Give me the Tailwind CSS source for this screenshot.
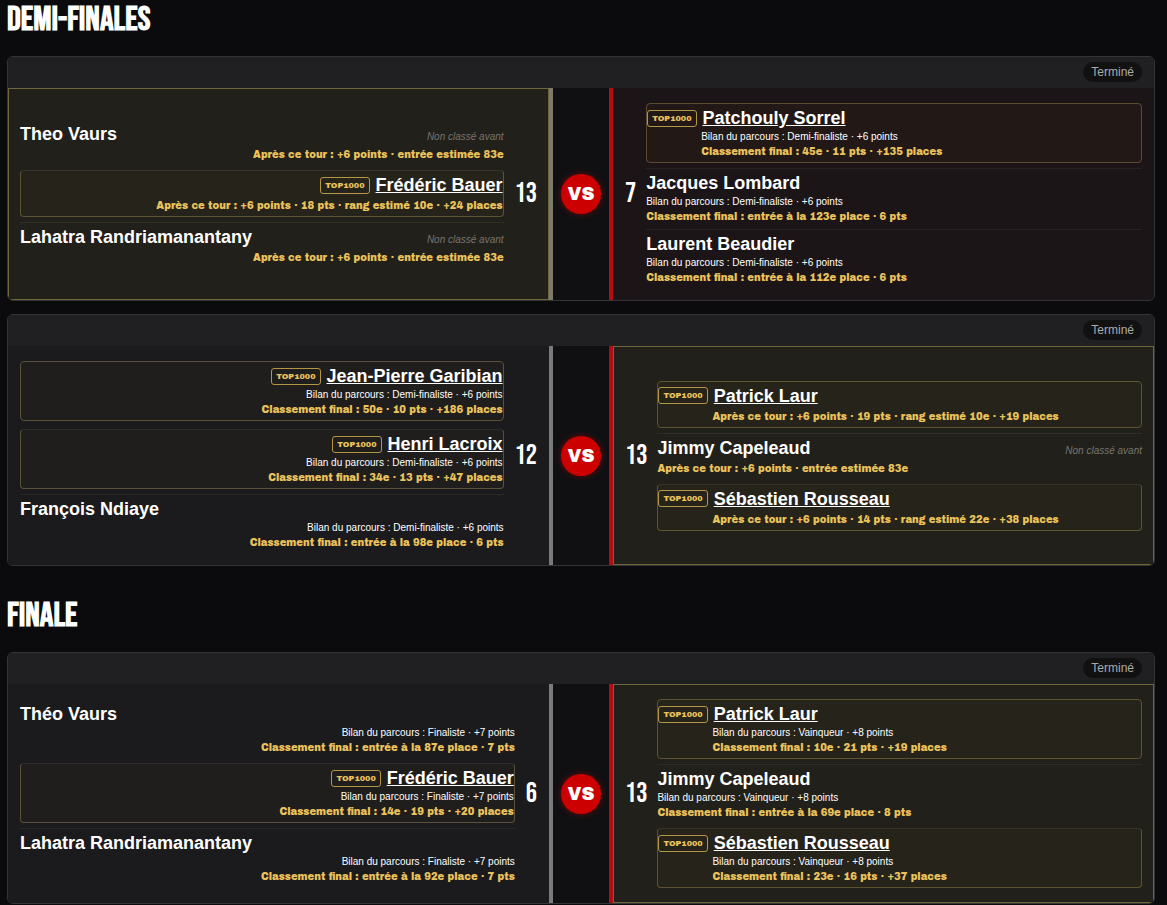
<!DOCTYPE html>
<html lang="fr">
<head>
  <meta charset="UTF-8" />
  <meta name="viewport" content="width=device-width, initial-scale=1.0" />
  <title>Phases finales</title>
  <script src="https://cdn.jsdelivr.net/npm/@tailwindcss/browser@4"></script>
</head>

<body class="bg-[#0b0b0d] text-white font-['Liberation_Sans',Arial,sans-serif] pl-[7px] pr-3">

  <!-- Demi-finales ------------------------------------------------------ -->
  <section>
    <h2 class="mb-4 text-[34px] leading-10 font-bold uppercase font-['Bebas_Neue','Liberation_Sans_Narrow',sans-serif]">Demi-finales</h2>

    <div class="flex flex-col gap-[13px]">

      <!-- match 1 -->
      <article class="rounded-md border border-[#343436] bg-[#101013] overflow-hidden">
        <header class="flex justify-end bg-[#202022] border-b border-[#202022] px-3 py-[5px]">
          <span class="rounded-full bg-[#111112] px-2 text-xs leading-5 text-[#aaaaaa]">Terminé</span>
        </header>
        <div class="grid grid-cols-[1fr_56px_1fr]">
          <div class="flex items-center gap-[11px] p-3 border-r-4 border-[#7c7a6e] bg-[#22201a] shadow-[inset_0_0_0_1px_#6f663c]">
            <ul class="flex-1 min-w-0 flex flex-col gap-[2px] text-right">
              <li class="py-[3px]">
                <div class="flex items-baseline justify-between">
                  <strong class="text-lg leading-[22px]">Theo Vaurs</strong>
                  <em class="text-[10px] leading-[15px] text-[#77756f]">Non classé avant</em>
                </div>
                <p class="mt-[2px] text-[10px] leading-[15px] text-[#ebc35c] font-['Archivo_Black','Arial_Black',Inter,sans-serif]">Après ce tour : +6 points · entrée estimée 83e</p>
              </li>
              <li class="my-[3px] py-[3px] rounded border border-[#5d5330] border-t-[#35332c] bg-[#26231a]">
                <div class="flex items-center justify-end gap-[6px]">
                  <span class="rounded-[3px] border border-[#b59645] px-1 text-[8px] leading-[15px] text-[#ebc35c] font-['Archivo_Black','Arial_Black',Inter,sans-serif]">TOP1000</span>
                  <a href="#" class="text-lg leading-[22px] font-bold underline">Frédéric Bauer</a>
                </div>
                <p class="mt-[2px] text-[10px] leading-[15px] text-[#ebc35c] font-['Archivo_Black','Arial_Black',Inter,sans-serif]">Après ce tour : +6 points · 18 pts · rang estimé 10e · +24 places</p>
              </li>
              <li class="py-[3px] border-t border-white/6">
                <div class="flex items-baseline justify-between">
                  <strong class="text-lg leading-[22px]">Lahatra Randriamanantany</strong>
                  <em class="text-[10px] leading-[15px] text-[#77756f]">Non classé avant</em>
                </div>
                <p class="mt-[2px] text-[10px] leading-[15px] text-[#ebc35c] font-['Archivo_Black','Arial_Black',Inter,sans-serif]">Après ce tour : +6 points · entrée estimée 83e</p>
              </li>
            </ul>
            <span class="text-[28px] leading-8 font-['Bebas_Neue','Liberation_Sans_Narrow',sans-serif]">13</span>
          </div>
          <div class="flex items-center justify-center">
            <span class="flex size-10 items-center justify-center rounded-full bg-[#cc0000] text-lg shadow-[0_0_6px_#cc000080] font-['Archivo_Black','Arial_Black',Inter,sans-serif]">VS</span>
          </div>
          <div class="flex items-center gap-[10px] p-3 border-l-4 border-[#b30c14] bg-[#1c1517]">
            <span class="text-[28px] leading-8 font-['Bebas_Neue','Liberation_Sans_Narrow',sans-serif]">7</span>
            <ul class="flex-1 min-w-0 flex flex-col gap-[2px]">
              <li class="my-[3px] py-[3px] rounded border border-[#5d4b30] bg-[#221917]">
                <div class="flex items-center gap-[6px]">
                  <span class="rounded-[3px] border border-[#b59645] px-1 text-[8px] leading-[15px] text-[#ebc35c] font-['Archivo_Black','Arial_Black',Inter,sans-serif]">TOP1000</span>
                  <a href="#" class="text-lg leading-[22px] font-bold underline">Patchouly Sorrel</a>
                </div>
                <p class="pl-[54px] text-[10px] leading-[15px]">Bilan du parcours : Demi-finaliste · +6 points</p>
                <p class="pl-[54px] text-[10px] leading-[15px] text-[#ebc35c] font-['Archivo_Black','Arial_Black',Inter,sans-serif]">Classement final : 45e · 11 pts · +135 places</p>
              </li>
              <li class="py-[3px] border-t border-white/6">
                <strong class="block text-lg leading-[22px]">Jacques Lombard</strong>
                <p class="text-[10px] leading-[15px]">Bilan du parcours : Demi-finaliste · +6 points</p>
                <p class="text-[10px] leading-[15px] text-[#ebc35c] font-['Archivo_Black','Arial_Black',Inter,sans-serif]">Classement final : entrée à la 123e place · 6 pts</p>
              </li>
              <li class="py-[3px] border-t border-white/6">
                <strong class="block text-lg leading-[22px]">Laurent Beaudier</strong>
                <p class="text-[10px] leading-[15px]">Bilan du parcours : Demi-finaliste · +6 points</p>
                <p class="text-[10px] leading-[15px] text-[#ebc35c] font-['Archivo_Black','Arial_Black',Inter,sans-serif]">Classement final : entrée à la 112e place · 6 pts</p>
              </li>
            </ul>
          </div>
        </div>
      </article>

      <!-- match 2 -->
      <article class="rounded-md border border-[#343436] bg-[#101013] overflow-hidden">
        <header class="flex justify-end bg-[#202022] border-b border-[#202022] px-3 py-[5px]">
          <span class="rounded-full bg-[#111112] px-2 text-xs leading-5 text-[#aaaaaa]">Terminé</span>
        </header>
        <div class="grid grid-cols-[1fr_56px_1fr]">
          <div class="flex items-center gap-[11px] p-3 border-r-4 border-[#7a7a7c] bg-[#1b1b1d]">
            <ul class="flex-1 min-w-0 flex flex-col gap-[2px] text-right">
              <li class="my-[3px] py-[3px] rounded border border-[#5b5138] bg-[#201e1c]">
                <div class="flex items-center justify-end gap-[6px]">
                  <span class="rounded-[3px] border border-[#b59645] px-1 text-[8px] leading-[15px] text-[#ebc35c] font-['Archivo_Black','Arial_Black',Inter,sans-serif]">TOP1000</span>
                  <a href="#" class="text-lg leading-[22px] font-bold underline">Jean-Pierre Garibian</a>
                </div>
                <p class="text-[10px] leading-[15px]">Bilan du parcours : Demi-finaliste · +6 points</p>
                <p class="text-[10px] leading-[15px] text-[#ebc35c] font-['Archivo_Black','Arial_Black',Inter,sans-serif]">Classement final : 50e · 10 pts · +186 places</p>
              </li>
              <li class="my-[3px] py-[3px] rounded border border-[#5b5138] border-t-[#2d2d2e] bg-[#201e1c]">
                <div class="flex items-center justify-end gap-[6px]">
                  <span class="rounded-[3px] border border-[#b59645] px-1 text-[8px] leading-[15px] text-[#ebc35c] font-['Archivo_Black','Arial_Black',Inter,sans-serif]">TOP1000</span>
                  <a href="#" class="text-lg leading-[22px] font-bold underline">Henri Lacroix</a>
                </div>
                <p class="text-[10px] leading-[15px]">Bilan du parcours : Demi-finaliste · +6 points</p>
                <p class="text-[10px] leading-[15px] text-[#ebc35c] font-['Archivo_Black','Arial_Black',Inter,sans-serif]">Classement final : 34e · 13 pts · +47 places</p>
              </li>
              <li class="py-[3px] border-t border-white/6">
                <strong class="block text-left text-lg leading-[22px]">François Ndiaye</strong>
                <p class="text-[10px] leading-[15px]">Bilan du parcours : Demi-finaliste · +6 points</p>
                <p class="text-[10px] leading-[15px] text-[#ebc35c] font-['Archivo_Black','Arial_Black',Inter,sans-serif]">Classement final : entrée à la 98e place · 6 pts</p>
              </li>
            </ul>
            <span class="text-[28px] leading-8 font-['Bebas_Neue','Liberation_Sans_Narrow',sans-serif]">12</span>
          </div>
          <div class="flex items-center justify-center">
            <span class="flex size-10 items-center justify-center rounded-full bg-[#cc0000] text-lg shadow-[0_0_6px_#cc000080] font-['Archivo_Black','Arial_Black',Inter,sans-serif]">VS</span>
          </div>
          <div class="flex items-center gap-[10px] p-3 border-l-4 border-[#b30c14] bg-[#22201a] shadow-[inset_0_0_0_1px_#6f663c]">
            <span class="text-[28px] leading-8 font-['Bebas_Neue','Liberation_Sans_Narrow',sans-serif]">13</span>
            <ul class="flex-1 min-w-0 flex flex-col gap-[2px]">
              <li class="my-[3px] py-[3px] rounded border border-[#5d5330] bg-[#26231a]">
                <div class="flex items-center gap-[6px]">
                  <span class="rounded-[3px] border border-[#b59645] px-1 text-[8px] leading-[15px] text-[#ebc35c] font-['Archivo_Black','Arial_Black',Inter,sans-serif]">TOP1000</span>
                  <a href="#" class="text-lg leading-[22px] font-bold underline">Patrick Laur</a>
                </div>
                <p class="mt-[2px] pl-[54px] text-[10px] leading-[15px] text-[#ebc35c] font-['Archivo_Black','Arial_Black',Inter,sans-serif]">Après ce tour : +6 points · 19 pts · rang estimé 10e · +19 places</p>
              </li>
              <li class="py-[3px] border-t border-white/6">
                <div class="flex items-baseline justify-between">
                  <strong class="text-lg leading-[22px]">Jimmy Capeleaud</strong>
                  <em class="text-[10px] leading-[15px] text-[#77756f]">Non classé avant</em>
                </div>
                <p class="mt-[2px] text-[10px] leading-[15px] text-[#ebc35c] font-['Archivo_Black','Arial_Black',Inter,sans-serif]">Après ce tour : +6 points · entrée estimée 83e</p>
              </li>
              <li class="my-[3px] py-[3px] rounded border border-[#5d5330] border-t-[#35332c] bg-[#26231a]">
                <div class="flex items-center gap-[6px]">
                  <span class="rounded-[3px] border border-[#b59645] px-1 text-[8px] leading-[15px] text-[#ebc35c] font-['Archivo_Black','Arial_Black',Inter,sans-serif]">TOP1000</span>
                  <a href="#" class="text-lg leading-[22px] font-bold underline">Sébastien Rousseau</a>
                </div>
                <p class="mt-[2px] pl-[54px] text-[10px] leading-[15px] text-[#ebc35c] font-['Archivo_Black','Arial_Black',Inter,sans-serif]">Après ce tour : +6 points · 14 pts · rang estimé 22e · +38 places</p>
              </li>
            </ul>
          </div>
        </div>
      </article>
    </div>
  </section>

  <!-- Finale ------------------------------------------------------------ -->
  <section class="mt-[30px]">
    <h2 class="mb-4 text-[34px] leading-10 font-bold uppercase font-['Bebas_Neue','Liberation_Sans_Narrow',sans-serif]">Finale</h2>

    <article class="rounded-md border border-[#343436] bg-[#101013] overflow-hidden">
      <header class="flex justify-end bg-[#202022] border-b border-[#202022] px-3 py-[5px]">
        <span class="rounded-full bg-[#111112] px-2 text-xs leading-5 text-[#aaaaaa]">Terminé</span>
      </header>
      <div class="grid grid-cols-[1fr_56px_1fr]">
        <div class="flex items-center gap-[11px] p-3 border-r-4 border-[#7a7a7c] bg-[#1b1b1d]">
          <ul class="flex-1 min-w-0 flex flex-col gap-[2px] text-right">
            <li class="py-[3px]">
              <strong class="block text-left text-lg leading-[22px]">Théo Vaurs</strong>
              <p class="text-[10px] leading-[15px]">Bilan du parcours : Finaliste · +7 points</p>
              <p class="text-[10px] leading-[15px] text-[#ebc35c] font-['Archivo_Black','Arial_Black',Inter,sans-serif]">Classement final : entrée à la 87e place · 7 pts</p>
            </li>
            <li class="my-[3px] py-[3px] rounded border border-[#5b5138] border-t-[#2d2d2e] bg-[#201e1c]">
              <div class="flex items-center justify-end gap-[6px]">
                <span class="rounded-[3px] border border-[#b59645] px-1 text-[8px] leading-[15px] text-[#ebc35c] font-['Archivo_Black','Arial_Black',Inter,sans-serif]">TOP1000</span>
                <a href="#" class="text-lg leading-[22px] font-bold underline">Frédéric Bauer</a>
              </div>
              <p class="text-[10px] leading-[15px]">Bilan du parcours : Finaliste · +7 points</p>
              <p class="text-[10px] leading-[15px] text-[#ebc35c] font-['Archivo_Black','Arial_Black',Inter,sans-serif]">Classement final : 14e · 19 pts · +20 places</p>
            </li>
            <li class="py-[3px] border-t border-white/6">
              <strong class="block text-left text-lg leading-[22px]">Lahatra Randriamanantany</strong>
              <p class="text-[10px] leading-[15px]">Bilan du parcours : Finaliste · +7 points</p>
              <p class="text-[10px] leading-[15px] text-[#ebc35c] font-['Archivo_Black','Arial_Black',Inter,sans-serif]">Classement final : entrée à la 92e place · 7 pts</p>
            </li>
          </ul>
          <span class="text-[28px] leading-8 font-['Bebas_Neue','Liberation_Sans_Narrow',sans-serif]">6</span>
        </div>
        <div class="flex items-center justify-center">
          <span class="flex size-10 items-center justify-center rounded-full bg-[#cc0000] text-lg shadow-[0_0_6px_#cc000080] font-['Archivo_Black','Arial_Black',Inter,sans-serif]">VS</span>
        </div>
        <div class="flex items-center gap-[10px] p-3 border-l-4 border-[#b30c14] bg-[#22201a] shadow-[inset_0_0_0_1px_#6f663c]">
          <span class="text-[28px] leading-8 font-['Bebas_Neue','Liberation_Sans_Narrow',sans-serif]">13</span>
          <ul class="flex-1 min-w-0 flex flex-col gap-[2px]">
            <li class="my-[3px] py-[3px] rounded border border-[#5d5330] bg-[#26231a]">
              <div class="flex items-center gap-[6px]">
                <span class="rounded-[3px] border border-[#b59645] px-1 text-[8px] leading-[15px] text-[#ebc35c] font-['Archivo_Black','Arial_Black',Inter,sans-serif]">TOP1000</span>
                <a href="#" class="text-lg leading-[22px] font-bold underline">Patrick Laur</a>
              </div>
              <p class="pl-[54px] text-[10px] leading-[15px]">Bilan du parcours : Vainqueur · +8 points</p>
              <p class="pl-[54px] text-[10px] leading-[15px] text-[#ebc35c] font-['Archivo_Black','Arial_Black',Inter,sans-serif]">Classement final : 10e · 21 pts · +19 places</p>
            </li>
            <li class="py-[3px] border-t border-white/6">
              <strong class="block text-lg leading-[22px]">Jimmy Capeleaud</strong>
              <p class="text-[10px] leading-[15px]">Bilan du parcours : Vainqueur · +8 points</p>
              <p class="text-[10px] leading-[15px] text-[#ebc35c] font-['Archivo_Black','Arial_Black',Inter,sans-serif]">Classement final : entrée à la 69e place · 8 pts</p>
            </li>
            <li class="my-[3px] py-[3px] rounded border border-[#5d5330] border-t-[#35332c] bg-[#26231a]">
              <div class="flex items-center gap-[6px]">
                <span class="rounded-[3px] border border-[#b59645] px-1 text-[8px] leading-[15px] text-[#ebc35c] font-['Archivo_Black','Arial_Black',Inter,sans-serif]">TOP1000</span>
                <a href="#" class="text-lg leading-[22px] font-bold underline">Sébastien Rousseau</a>
              </div>
              <p class="pl-[54px] text-[10px] leading-[15px]">Bilan du parcours : Vainqueur · +8 points</p>
              <p class="pl-[54px] text-[10px] leading-[15px] text-[#ebc35c] font-['Archivo_Black','Arial_Black',Inter,sans-serif]">Classement final : 23e · 16 pts · +37 places</p>
            </li>
          </ul>
        </div>
      </div>
    </article>
  </section>

</body>
</html>
